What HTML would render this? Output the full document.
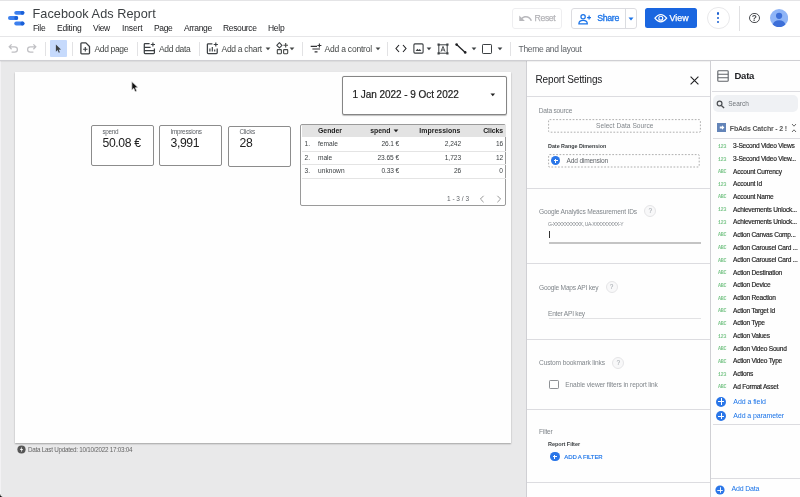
<!DOCTYPE html>
<html><head><meta charset="utf-8">
<style>
*{box-sizing:border-box;margin:0;padding:0}
html,body{width:800px;height:497px;overflow:hidden;background:#fff;font-family:"Liberation Sans",sans-serif;color:#202124}
div,svg{position:absolute}
.t{white-space:nowrap;line-height:1}
#title{left:32.5px;top:7.8px;font-size:12.7px;color:#3c4043;letter-spacing:-0.12px}
.menu{top:24.2px;font-size:8.5px;color:#202124}
#tb{left:0;top:36px;width:800px;height:24.5px;background:#fff;border-top:1px solid #e6e6e8;border-bottom:1px solid #d4d4d8}
.tbt{top:44.6px;font-size:8.5px;color:#444746}
.vsep{top:41.5px;width:1px;height:14px;background:#e2e2e4}
#canvasbg{left:0;top:60px;width:527px;height:437px;background:#e9e9ea}
#sheet{left:15.3px;top:71.7px;width:495.5px;height:370.9px;background:#fefefe;box-shadow:0 1px 1.5px rgba(0,0,0,.3)}
.card{background:#fff;border:1px solid #8c8c8c;border-radius:2px;top:125px;height:41px;width:62.6px}
.card .l{left:10.5px;top:2.5px;font-size:6.4px;color:#5f6368}
.card .v{left:10.5px;top:10.6px;font-size:12.2px;color:#212121;letter-spacing:-0.2px}
#rs{left:526.2px;top:60.5px;width:185px;height:437px;background:#fefefe;border-left:1px solid #d0d0d4}
#dp{left:710.4px;top:60.5px;width:89.6px;height:437px;background:#fefefe;border-left:1px solid #d0d0d4}
.hl{height:1px;background:#dcdce0}
.lab{font-size:6.6px;color:#80868b}
.fld{left:733px;font-size:6.6px;letter-spacing:-0.23px;white-space:nowrap;line-height:1;color:#262626;-webkit-text-stroke:0.18px #262626}
.typ{left:718px;font-family:"Liberation Mono",monospace;font-size:5px;font-weight:bold;color:#7cc68b;white-space:nowrap;line-height:1;letter-spacing:-0.3px}
.help{width:12px;height:12px;border-radius:50%;border:1px solid #e4e4e6;background:#f8f8f9;color:#9aa0a6;font-size:6.5px;text-align:center;line-height:10.5px}
.plus{width:9.4px;height:9.4px;border-radius:50%;background:#2a76e8}
.plus:before{content:"";position:absolute;left:2.6px;top:4.15px;width:4.2px;height:1.1px;background:#fff}
.plus:after{content:"";position:absolute;left:4.15px;top:2.6px;width:1.1px;height:4.2px;background:#fff}
.p2{width:10px;height:10px;border-radius:50%;background:#2a76e8}
.p2:before{content:"";position:absolute;left:1.7px;top:4.5px;width:6.6px;height:1px;background:#fff}
.p2:after{content:"";position:absolute;left:4.5px;top:1.7px;width:1px;height:6.6px;background:#fff}
.th{top:127.8px;font-size:6.9px;font-weight:bold;color:#212121}
.td{font-size:6.6px;color:#3c4043}
</style></head><body><div id="root" style="left:0;top:0;width:800px;height:497px;overflow:hidden;will-change:transform">
<!-- header -->
<svg style="left:0;top:0" width="30" height="30" viewBox="0 0 30 30">
 <rect x="14.25" y="10.9" width="10.15" height="3.9" rx="1.95" fill="#3d80ee"/><circle cx="22.45" cy="12.85" r="1.95" fill="#1a60d8"/>
 <rect x="8" y="16.1" width="10.2" height="4" rx="2" fill="#3d80ee"/><circle cx="16.2" cy="18.1" r="2" fill="#1a60d8"/>
 <rect x="14.25" y="21.5" width="10.15" height="4" rx="2" fill="#3d80ee"/><circle cx="22.45" cy="23.5" r="2" fill="#1a60d8"/>
</svg>
<div style="left:0;top:0;width:800px;height:0.9px;background:#e4e4e6"></div>
<div id="title" class="t" style="letter-spacing:0.064px;">Facebook Ads Report</div>
<div class="menu t" style="letter-spacing:-0.360px;left:33px">File</div>
<div class="menu t" style="letter-spacing:-0.231px;left:57px">Editing</div>
<div class="menu t" style="letter-spacing:-0.360px;left:93px">View</div>
<div class="menu t" style="letter-spacing:-0.139px;left:122px">Insert</div>
<div class="menu t" style="letter-spacing:-0.360px;left:154px">Page</div>
<div class="menu t" style="letter-spacing:-0.346px;left:184px">Arrange</div>
<div class="menu t" style="letter-spacing:-0.360px;left:223px">Resource</div>
<div class="menu t" style="letter-spacing:-0.281px;left:268px">Help</div>

<div style="left:512.3px;top:7.5px;width:49.7px;height:21px;border:1px solid #eeeef0;border-radius:3px"></div>
<svg style="left:517.6px;top:10.6px" width="15" height="15" viewBox="0 0 24 24"><path d="M12.5 8c-2.65 0-5.05.99-6.9 2.6L2 7v9h9l-3.62-3.62c1.39-1.16 3.16-1.88 5.12-1.88 3.54 0 6.55 2.31 7.6 5.5l2.37-.78C21.08 11.03 17.15 8 12.5 8z" fill="#b8b8bc"/></svg>
<div class="t" style="letter-spacing:-0.360px;left:534.5px;top:13.8px;font-size:8.7px;color:#b4b4b8;-webkit-text-stroke:0.25px #b4b4b8">Reset</div>

<div style="left:570.8px;top:7.5px;width:66.2px;height:21px;border:1px solid #dcdce0;border-radius:3px"></div>
<div style="left:625px;top:7.5px;width:1px;height:21px;background:#dadce0"></div>
<svg style="left:577.6px;top:12.6px" width="13.6" height="12.5" viewBox="0 0 12 11"><circle cx="4.5" cy="3.3" r="1.9" fill="none" stroke="#1a73e8" stroke-width="1.1"/><path d="M0.8 9.5 Q0.8 6.6 4.5 6.6 Q8.2 6.6 8.2 9.5 Z" fill="none" stroke="#1a73e8" stroke-width="1.1"/><path d="M9.8 2.2 V5.8 M8 4 H11.6" stroke="#1a73e8" stroke-width="1.1"/></svg>
<div class="t" style="letter-spacing:-0.330px;left:597.2px;top:13.9px;font-size:8.8px;color:#1a73e8;-webkit-text-stroke:0.3px #1a73e8">Share</div>
<svg style="left:628px;top:16.5px" width="6" height="4" viewBox="0 0 6 4"><path d="M0.5 0.5 L5.5 0.5 L3 3.5 Z" fill="#1a73e8"/></svg>

<div style="left:645.2px;top:7.5px;width:51.8px;height:20.5px;background:#1a66e0;border-radius:2.5px"></div>
<svg style="left:654.4px;top:13px" width="13.6" height="10.4" viewBox="0 0 13 10"><path d="M0.8 5 Q6.5 -2.2 12.2 5 Q6.5 12.2 0.8 5 Z" fill="none" stroke="#fff" stroke-width="1.1"/><circle cx="6.5" cy="5" r="1.9" fill="none" stroke="#fff" stroke-width="1.1"/></svg>
<div class="t" style="letter-spacing:0.051px;left:669.5px;top:14px;font-size:8.8px;color:#fff;-webkit-text-stroke:0.25px #fff">View</div>

<div style="left:707px;top:6.5px;width:22.5px;height:22.5px;border:1px solid #e8e8ea;border-radius:50%"></div>
<div style="left:717.1px;top:12.4px;width:2.4px;height:2.4px;border-radius:50%;background:#1a5fd0"></div>
<div style="left:717.1px;top:16.6px;width:2.4px;height:2.4px;border-radius:50%;background:#1a5fd0"></div>
<div style="left:717.1px;top:20.8px;width:2.4px;height:2.4px;border-radius:50%;background:#1a5fd0"></div>
<div style="left:739px;top:6px;width:1px;height:25px;background:#e0e0e2"></div>
<div style="left:749px;top:12.5px;width:10.5px;height:10.5px;border:1.2px solid #4a4d51;border-radius:50%;color:#4a4d51;font-size:8.3px;font-weight:bold;text-align:center;line-height:8.8px">?</div>
<svg style="left:770.1px;top:8.7px" width="18.2" height="18.2" viewBox="0 0 18 18"><defs><clipPath id="av"><circle cx="9" cy="9" r="9"/></clipPath></defs><circle cx="9" cy="9" r="9" fill="#8fb5f7"/><g clip-path="url(#av)"><circle cx="9" cy="6.8" r="3.1" fill="#3d6fd8"/><ellipse cx="9" cy="15.6" rx="6.1" ry="4.4" fill="#3d6fd8"/></g></svg>

<!-- toolbar -->
<div id="tb"></div>
<svg style="left:7.8px;top:43px" width="11" height="11" viewBox="0 0 11 11"><path d="M3.6 1.4 L1.2 3.8 L3.6 6.2 M1.4 3.8 H6.6 Q9.4 3.8 9.4 6.5 Q9.4 9.2 6.6 9.2 H3.6" fill="none" stroke="#c0c0c4" stroke-width="1.25"/></svg>
<svg style="left:26px;top:43px" width="11" height="11" viewBox="0 0 11 11"><path d="M7.4 1.4 L9.8 3.8 L7.4 6.2 M9.6 3.8 H4.4 Q1.6 3.8 1.6 6.5 Q1.6 9.2 4.4 9.2 H7.4" fill="none" stroke="#c0c0c4" stroke-width="1.25"/></svg>
<div class="vsep" style="left:45px"></div>
<div style="left:50px;top:39.5px;width:17px;height:17px;background:#c6dafc;border-radius:1px"></div>
<svg style="left:55.3px;top:44px" width="6.9" height="9.4" viewBox="0 0 8 11"><path d="M1 0.6 L1 9 L3 7.1 L4.4 10.3 L5.7 9.7 L4.3 6.6 L7 6.4 Z" fill="#3c4043"/></svg>
<div class="vsep" style="left:72px"></div>
<svg style="left:80px;top:42.3px" width="10.5" height="12.5" viewBox="0 0 10.5 12.5"><path d="M1.7 0.9 H5.9 L9.5 4.5 V11 Q9.5 11.8 8.7 11.8 H1.7 Q0.9 11.8 0.9 11 V1.7 Q0.9 0.9 1.7 0.9 Z" fill="none" stroke="#3c4043" stroke-width="1.3" stroke-linejoin="round"/><path d="M5.3 5 V9.4 M3.1 7.2 H7.5" stroke="#3c4043" stroke-width="1.15"/></svg>
<div class="tbt t" style="letter-spacing:-0.360px;left:94.5px">Add page</div>
<div class="vsep" style="left:136.5px"></div>
<svg style="left:143.3px;top:42.3px" width="13" height="13" viewBox="0 0 13 13"><path d="M6.6 1.6 H2 Q1.3 1.6 1.3 2.3 V10.8 Q1.3 11.6 2 11.6 H10.6 Q11.4 11.6 11.4 10.8 V6.6 M1.3 5.4 H7.6 M1.3 8.5 H11.4" fill="none" stroke="#3c4043" stroke-width="1.25"/><path d="M9.9 0.4 V4.6 M7.8 2.5 H12" stroke="#3c4043" stroke-width="1.15"/></svg>
<div class="tbt t" style="letter-spacing:-0.338px;left:159px">Add data</div>
<div class="vsep" style="left:199.2px"></div>
<svg style="left:206px;top:42.2px" width="13" height="13" viewBox="0 0 13 13"><path d="M6.4 1.8 H2.2 Q1.4 1.8 1.4 2.6 V10.8 Q1.4 11.6 2.2 11.6 H10.4 Q11.2 11.6 11.2 10.8 V6.6" fill="none" stroke="#3c4043" stroke-width="1.25"/><path d="M3.9 9.6 V6.6 M6.3 9.6 V5 M8.7 9.6 V7.6" stroke="#3c4043" stroke-width="1.15"/><path d="M9.8 0.4 V4.6 M7.7 2.5 H11.9" stroke="#3c4043" stroke-width="1.15"/></svg>
<div class="tbt t" style="letter-spacing:-0.284px;left:221.5px">Add a chart</div>
<svg style="left:265.4px;top:47px" width="6" height="4" viewBox="0 0 6 4"><path d="M0.6 0.5 L5.4 0.5 L3 3.3 Z" fill="#444746"/></svg>
<svg style="left:276px;top:42px" width="13" height="13" viewBox="0 0 13 13"><path d="M3.4 0.7 L6 3.3 L3.4 5.9 L0.8 3.3 Z" fill="none" stroke="#3c4043" stroke-width="1.1" stroke-linejoin="round"/><rect x="1.3" y="7.6" width="4.1" height="4.1" rx="0.6" fill="none" stroke="#444746" stroke-width="1.1"/><rect x="7.6" y="7.6" width="4.1" height="4.1" rx="0.6" fill="none" stroke="#444746" stroke-width="1.1"/><path d="M9.7 1 V5.6 M7.4 3.3 H12" stroke="#444746" stroke-width="1.1"/></svg>
<svg style="left:289.2px;top:47px" width="6" height="4" viewBox="0 0 6 4"><path d="M0.6 0.5 L5.4 0.5 L3 3.3 Z" fill="#444746"/></svg>
<div class="vsep" style="left:302px"></div>
<svg style="left:309.5px;top:42.5px" width="13" height="12" viewBox="0 0 13 12"><path d="M0.7 3.3 H7 M2.4 6 H10 M4.6 8.8 H7.5" stroke="#303134" stroke-width="1.2"/><path d="M9.4 0.5 V4.5 M7.4 2.5 H11.4" stroke="#303134" stroke-width="1.1"/></svg>
<div class="tbt t" style="letter-spacing:-0.207px;left:324.5px">Add a control</div>
<svg style="left:375px;top:47px" width="6" height="4" viewBox="0 0 6 4"><path d="M0.6 0.5 L5.4 0.5 L3 3.3 Z" fill="#444746"/></svg>
<div class="vsep" style="left:387px"></div>
<svg style="left:394.5px;top:44px" width="12" height="9" viewBox="0 0 12 9"><path d="M4 1 L1 4.5 L4 8 M8 1 L11 4.5 L8 8" fill="none" stroke="#202124" stroke-width="1.1"/></svg>
<svg style="left:413px;top:43px" width="11" height="11" viewBox="0 0 11 11"><rect x="0.9" y="0.9" width="9.2" height="9.2" rx="1" fill="none" stroke="#3c4043" stroke-width="1.1"/><path d="M2.6 8 L4.4 5.8 L5.6 7 L6.8 6 L8.4 8 Z" fill="#3c4043"/></svg>
<svg style="left:425.5px;top:46.5px" width="6" height="4" viewBox="0 0 6 4"><path d="M0.6 0.5 L5.4 0.5 L3 3.3 Z" fill="#3c4043"/></svg>
<svg style="left:436.5px;top:42.5px" width="12" height="12" viewBox="0 0 12 12"><rect x="1.8" y="1.8" width="8.4" height="8.4" fill="none" stroke="#3c4043" stroke-width="1"/><rect x="0.5" y="0.5" width="2.2" height="2.2" fill="#3c4043"/><rect x="9.3" y="0.5" width="2.2" height="2.2" fill="#3c4043"/><rect x="0.5" y="9.3" width="2.2" height="2.2" fill="#3c4043"/><rect x="9.3" y="9.3" width="2.2" height="2.2" fill="#3c4043"/><path d="M4 8.6 L6 3.4 L8 8.6 M4.7 7 H7.3" fill="none" stroke="#3c4043" stroke-width="0.9"/></svg>
<svg style="left:454.5px;top:43px" width="12" height="11" viewBox="0 0 12 11"><path d="M1.6 1.6 L10.2 9.4" stroke="#202124" stroke-width="1.3"/><circle cx="1.6" cy="1.6" r="1.3" fill="#202124"/><circle cx="10.2" cy="9.4" r="1.3" fill="#202124"/></svg>
<svg style="left:470.5px;top:46.5px" width="6" height="4" viewBox="0 0 6 4"><path d="M0.6 0.5 L5.4 0.5 L3 3.3 Z" fill="#3c4043"/></svg>
<div style="left:481.9px;top:43.5px;width:10.2px;height:10.2px;border:1.1px solid #3c4043;border-radius:1.2px"></div>
<svg style="left:496.5px;top:46.5px" width="6" height="4" viewBox="0 0 6 4"><path d="M0.6 0.5 L5.4 0.5 L3 3.3 Z" fill="#3c4043"/></svg>
<div class="vsep" style="left:509.7px"></div>
<div class="tbt t" style="letter-spacing:-0.313px;left:518.5px;color:#5f6368">Theme and layout</div>

<!-- canvas -->
<div id="canvasbg"></div>
<div id="sheet"></div>
<svg style="left:130.9px;top:80.8px;filter:drop-shadow(0 0.4px 0.6px rgba(0,0,0,.35))" width="8.1" height="11.7" viewBox="0 0 9 13"><path d="M1 0.8 L1 10 L3.1 8 L4.7 11.8 L6.3 11.1 L4.7 7.4 L7.6 7.2 Z" fill="#111" stroke="#fff" stroke-width="0.6"/></svg>

<div class="card" style="left:91px"><div class="l t" style="letter-spacing:-0.360px;">spend</div><div class="v t" style="letter-spacing:-0.360px;">50.08 €</div></div>
<div class="card" style="left:159px"><div class="l t" style="letter-spacing:-0.291px;">Impressions</div><div class="v t" style="letter-spacing:-0.360px;">3,991</div></div>
<div class="card" style="left:228px;top:125.7px"><div class="l t" style="letter-spacing:-0.245px;">Clicks</div><div class="v t" style="letter-spacing:-0.360px;">28</div></div>

<div style="left:341.6px;top:75.5px;width:165px;height:39px;border:1px solid #858585;border-radius:2px;background:#fff;box-shadow:0 0.5px 1px rgba(0,0,0,.25)"></div>
<div class="t" style="letter-spacing:-0.049px;left:352.5px;top:90.2px;font-size:10px;color:#212121;-webkit-text-stroke:0.2px #212121">1 Jan 2022 - 9 Oct 2022</div>
<svg style="left:490.3px;top:93px" width="5.6" height="4" viewBox="0 0 7 5"><path d="M0.6 0.6 L6.4 0.6 L3.5 4 Z" fill="#212121"/></svg>

<div style="left:300.2px;top:124px;width:206px;height:82px;border:1px solid #9a9a9a;border-radius:2px;background:#fff"></div>
<div style="left:301.5px;top:125px;width:204px;height:12px;background:#e3e3e3"></div>
<div class="th t" style="letter-spacing:-0.023px;left:318px">Gender</div>
<div class="th t" style="letter-spacing:-0.022px;right:409.5px">spend</div>
<svg style="left:393px;top:129px" width="6" height="4" viewBox="0 0 6 4"><path d="M0.6 0.5 L5.4 0.5 L3 3.3 Z" fill="#212121"/></svg>
<div class="th t" style="letter-spacing:0.058px;right:339.5px">Impressions</div>
<div class="th t" style="letter-spacing:-0.075px;right:297px">Clicks</div>
<div class="hl" style="left:301.5px;top:150.5px;width:204px;background:#e4e4e4"></div>
<div class="hl" style="left:301.5px;top:164px;width:204px;background:#e4e4e4"></div>
<div class="hl" style="left:301.5px;top:178px;width:204px;background:#e4e4e4"></div>
<div class="td t" style="left:304.5px;top:140.7px">1.</div><div class="td t" style="letter-spacing:0.037px;left:318px;top:140.7px">female</div><div class="td t" style="letter-spacing:-0.135px;right:401px;top:140.7px">26.1 €</div><div class="td t" style="letter-spacing:-0.048px;right:339px;top:140.7px">2,242</div><div class="td t" style="letter-spacing:-0.229px;right:297px;top:140.7px">16</div>
<div class="td t" style="left:304.5px;top:154.7px">2.</div><div class="td t" style="letter-spacing:-0.028px;left:318px;top:154.7px">male</div><div class="td t" style="letter-spacing:-0.062px;right:401px;top:154.7px">23.65 €</div><div class="td t" style="letter-spacing:-0.048px;right:339px;top:154.7px">1,723</div><div class="td t" style="letter-spacing:-0.229px;right:297px;top:154.7px">12</div>
<div class="td t" style="left:304.5px;top:167.5px">3.</div><div class="td t" style="letter-spacing:0.030px;left:318px;top:167.5px">unknown</div><div class="td t" style="letter-spacing:-0.135px;right:401px;top:167.5px">0.33 €</div><div class="td t" style="letter-spacing:-0.229px;right:339px;top:167.5px">26</div><div class="td t" style="right:297px;top:167.5px">0</div>
<div class="td t" style="letter-spacing:-0.006px;left:447px;top:195.5px;font-size:6.5px;color:#5f6368">1 - 3 / 3</div>
<svg style="left:479px;top:195px" width="6" height="8" viewBox="0 0 6 8"><path d="M4.6 0.8 L1.4 4 L4.6 7.2" fill="none" stroke="#8a8a8a" stroke-width="0.9"/></svg>
<svg style="left:495.5px;top:195px" width="6" height="8" viewBox="0 0 6 8"><path d="M1.4 0.8 L4.6 4 L1.4 7.2" fill="none" stroke="#8a8a8a" stroke-width="0.9"/></svg>

<svg style="left:16.8px;top:445.1px" width="9" height="9" viewBox="0 0 9 9"><circle cx="4.5" cy="4.5" r="4.1" fill="#555"/><path d="M5.2 1.6 L2.9 5 H4.4 L3.8 7.4 L6.1 4 H4.6 Z" fill="#fff"/></svg>
<div class="t" style="letter-spacing:-0.253px;left:28px;top:446.7px;font-size:6.3px;color:#666">Data Last Updated: 10/10/2022 17:03:04</div>
<svg style="left:0;top:494px" width="3" height="3" viewBox="0 0 8 8"><path d="M0 0 Q0.3 6.5 7 8 L0 8 Z" fill="#111"/></svg><div style="left:0;top:60px;width:1.2px;height:434px;background:#f3f2f4"></div>

<!-- report settings -->
<div id="rs"></div>
<div class="t" style="letter-spacing:-0.147px;left:535.5px;top:74.7px;font-size:10px;color:#202124">Report Settings</div>
<svg style="left:689.6px;top:76.1px" width="9" height="9" viewBox="0 0 9 9"><path d="M0.6 0.6 L8.4 8.4 M8.4 0.6 L0.6 8.4" stroke="#202124" stroke-width="1.1"/></svg>
<div class="hl" style="left:527.2px;top:96px;width:183px"></div>
<div class="lab t" style="letter-spacing:-0.187px;left:538.7px;top:107.9px">Data source</div>
<svg style="left:548px;top:119px" width="153" height="14" viewBox="0 0 153 14"><rect x="0.6" y="0.6" width="151.8" height="12.6" rx="1" fill="none" stroke="#a6a6a6" stroke-width="0.9" stroke-dasharray="1.7 1.6"/></svg>
<div class="t" style="letter-spacing:0.039px;left:596px;top:123.4px;font-size:6.6px;color:#80868b">Select Data Source</div>
<div class="t" style="letter-spacing:-0.016px;left:548px;top:143.6px;font-size:5.4px;font-weight:bold;color:#3c4043">Date Range Dimension</div>
<svg style="left:548px;top:154.2px" width="152" height="14" viewBox="0 0 152 14"><rect x="0.6" y="0.6" width="150.6" height="12.4" rx="1" fill="none" stroke="#a6a6a6" stroke-width="0.9" stroke-dasharray="1.7 1.6"/></svg>
<div class="plus" style="left:551px;top:156px"></div>
<div class="t" style="letter-spacing:-0.170px;left:566.5px;top:158px;font-size:6.6px;color:#5f6368">Add dimension</div>
<div class="hl" style="left:527.2px;top:188px;width:183px"></div>
<div class="lab t" style="letter-spacing:-0.158px;left:539px;top:209.3px">Google Analytics Measurement IDs</div>
<div class="help" style="left:644.2px;top:205.3px">?</div>
<div class="t" style="letter-spacing:-0.360px;left:548px;top:222px;font-size:5px;color:#80868b">G-XXXXXXXXXX, UA-XXXXXXXXX-Y</div>
<div style="left:548.8px;top:231px;width:1px;height:7px;background:#333"></div>
<div style="left:549px;top:242.3px;width:152px;height:1.4px;background:#c4c4c4"></div>
<div class="hl" style="left:527.2px;top:263.3px;width:183px"></div>
<div class="lab t" style="letter-spacing:-0.212px;left:539px;top:284.6px">Google Maps API key</div>
<div class="help" style="left:605.5px;top:281px">?</div>
<div class="t" style="letter-spacing:-0.236px;left:548px;top:310.6px;font-size:6.6px;color:#80868b">Enter API key</div>
<div class="hl" style="left:549px;top:318px;width:152px;background:#e2e2e4"></div>
<div class="hl" style="left:527.2px;top:339.3px;width:183px"></div>
<div class="lab t" style="letter-spacing:-0.123px;left:539px;top:360.1px">Custom bookmark links</div>
<div class="help" style="left:612.2px;top:356.6px">?</div>
<div style="left:549.2px;top:379.9px;width:9.4px;height:9.3px;border:1px solid #8e9195;border-radius:1.2px;background:#fff"></div>
<div class="t" style="letter-spacing:-0.120px;left:565.3px;top:381.6px;font-size:6.6px;color:#80868b">Enable viewer filters in report link</div>
<div class="hl" style="left:527.2px;top:409.2px;width:183px"></div>
<div class="lab t" style="letter-spacing:-0.174px;left:539px;top:428.9px">Filter</div>
<div class="t" style="letter-spacing:-0.056px;left:548px;top:441.8px;font-size:5.5px;font-weight:bold;color:#3c4043">Report Filter</div>
<div class="plus" style="left:550.2px;top:452px"></div>
<div class="t" style="letter-spacing:-0.111px;left:564.3px;top:454.2px;font-size:6px;color:#1a73e8;-webkit-text-stroke:0.15px #1a73e8">ADD A FILTER</div>
<div class="hl" style="left:527.2px;top:482px;width:183px"></div>

<!-- data panel -->
<div style="left:0;top:59.6px;width:800px;height:1.1px;background:#cfcfd3;box-shadow:0 0.5px 1px rgba(0,0,0,.12)"></div>
<div id="dp"></div>
<svg style="left:717px;top:70px" width="12" height="12" viewBox="0 0 12 12"><rect x="0.8" y="0.8" width="10.4" height="10.4" rx="0.8" fill="none" stroke="#5f6368" stroke-width="1.1"/><path d="M0.8 4.3 H11.2 M0.8 7.7 H11.2" stroke="#5f6368" stroke-width="1.1"/></svg>
<div class="t" style="letter-spacing:-0.255px;left:734.5px;top:70.8px;font-size:9.5px;font-weight:bold;color:#202124">Data</div>
<div class="hl" style="left:712px;top:91px;width:88px"></div>
<div style="left:713.2px;top:95px;width:85.3px;height:17.4px;background:#eff1f4;border-radius:5px"></div>
<svg style="left:716px;top:99.5px" width="9" height="9" viewBox="0 0 8 8"><circle cx="3.2" cy="3.2" r="2.1" fill="none" stroke="#4a4d51" stroke-width="1.1"/><path d="M4.8 4.8 L7.2 7.2" stroke="#4a4d51" stroke-width="1.2"/></svg>
<div class="t" style="letter-spacing:0.016px;left:728.2px;top:100.9px;font-size:6.5px;color:#70757a">Search</div>
<div style="left:716.5px;top:123px;width:9.6px;height:9.4px;background:#6384b8"></div>
<svg style="left:718.5px;top:125.2px" width="6" height="5" viewBox="0 0 6 5"><path d="M0.8 1.5 H3 V0.3 L5.4 2.5 L3 4.7 V3.5 H0.8 Z" fill="#fff"/></svg>
<div class="t" style="letter-spacing:-0.177px;left:729.8px;top:124.6px;font-size:7px;color:#555;font-weight:bold">FbAds Catchr - 2 !</div>
<svg style="left:791px;top:123px" width="6" height="10" viewBox="0 0 6 10"><path d="M1 1 L3 3.2 L5 1 M1 9 L3 6.8 L5 9" fill="none" stroke="#444" stroke-width="0.8"/></svg>
<div class="hl" style="left:713px;top:138.3px;width:87px"></div>
<div class="typ" style="top:144.8px">123</div><div class="fld" style="top:143.3px">3-Second Video Views</div>
<div class="typ" style="top:157.5px">123</div><div class="fld" style="top:156.0px">3-Second Video View...</div>
<div class="typ" style="top:170.1px">ABC</div><div class="fld" style="top:168.6px">Account Currency</div>
<div class="typ" style="top:182.8px">123</div><div class="fld" style="top:181.2px">Account Id</div>
<div class="typ" style="top:195.4px">ABC</div><div class="fld" style="top:193.9px">Account Name</div>
<div class="typ" style="top:208.1px">123</div><div class="fld" style="top:206.6px">Achievements Unlock...</div>
<div class="typ" style="top:220.7px">123</div><div class="fld" style="top:219.2px">Achievements Unlock...</div>
<div class="typ" style="top:233.4px">ABC</div><div class="fld" style="top:231.9px">Action Canvas Comp...</div>
<div class="typ" style="top:246.0px">ABC</div><div class="fld" style="top:244.5px">Action Carousel Card ...</div>
<div class="typ" style="top:258.7px">ABC</div><div class="fld" style="top:257.2px">Action Carousel Card ...</div>
<div class="typ" style="top:271.3px">ABC</div><div class="fld" style="top:269.8px">Action Destination</div>
<div class="typ" style="top:283.9px">ABC</div><div class="fld" style="top:282.4px">Action Device</div>
<div class="typ" style="top:296.6px">ABC</div><div class="fld" style="top:295.1px">Action Reaction</div>
<div class="typ" style="top:309.3px">ABC</div><div class="fld" style="top:307.8px">Action Target Id</div>
<div class="typ" style="top:321.9px">ABC</div><div class="fld" style="top:320.4px">Action Type</div>
<div class="typ" style="top:334.6px">123</div><div class="fld" style="top:333.1px">Action Values</div>
<div class="typ" style="top:347.2px">ABC</div><div class="fld" style="top:345.7px">Action Video Sound</div>
<div class="typ" style="top:359.9px">ABC</div><div class="fld" style="top:358.4px">Action Video Type</div>
<div class="typ" style="top:372.5px">123</div><div class="fld" style="top:371.0px">Actions</div>
<div class="typ" style="top:385.2px">ABC</div><div class="fld" style="top:383.7px">Ad Format Asset</div>
<div class="p2" style="left:716.1px;top:396.8px"></div>
<div class="t" style="letter-spacing:-0.057px;left:733.3px;top:397.9px;font-size:7px;color:#1a73e8">Add a field</div>
<div class="p2" style="left:716.1px;top:411px"></div>
<div class="t" style="letter-spacing:-0.100px;left:733.3px;top:412.3px;font-size:7px;color:#1a73e8">Add a parameter</div>
<div class="hl" style="left:713px;top:424.2px;width:87px"></div>
<div class="hl" style="left:711.4px;top:478.2px;width:88.6px"></div>
<div class="p2" style="left:714.6px;top:484.8px;transform:scale(0.92)"></div>
<div class="t" style="letter-spacing:-0.172px;left:731.5px;top:485.3px;font-size:7px;color:#1a73e8">Add Data</div>
</div></body></html>
